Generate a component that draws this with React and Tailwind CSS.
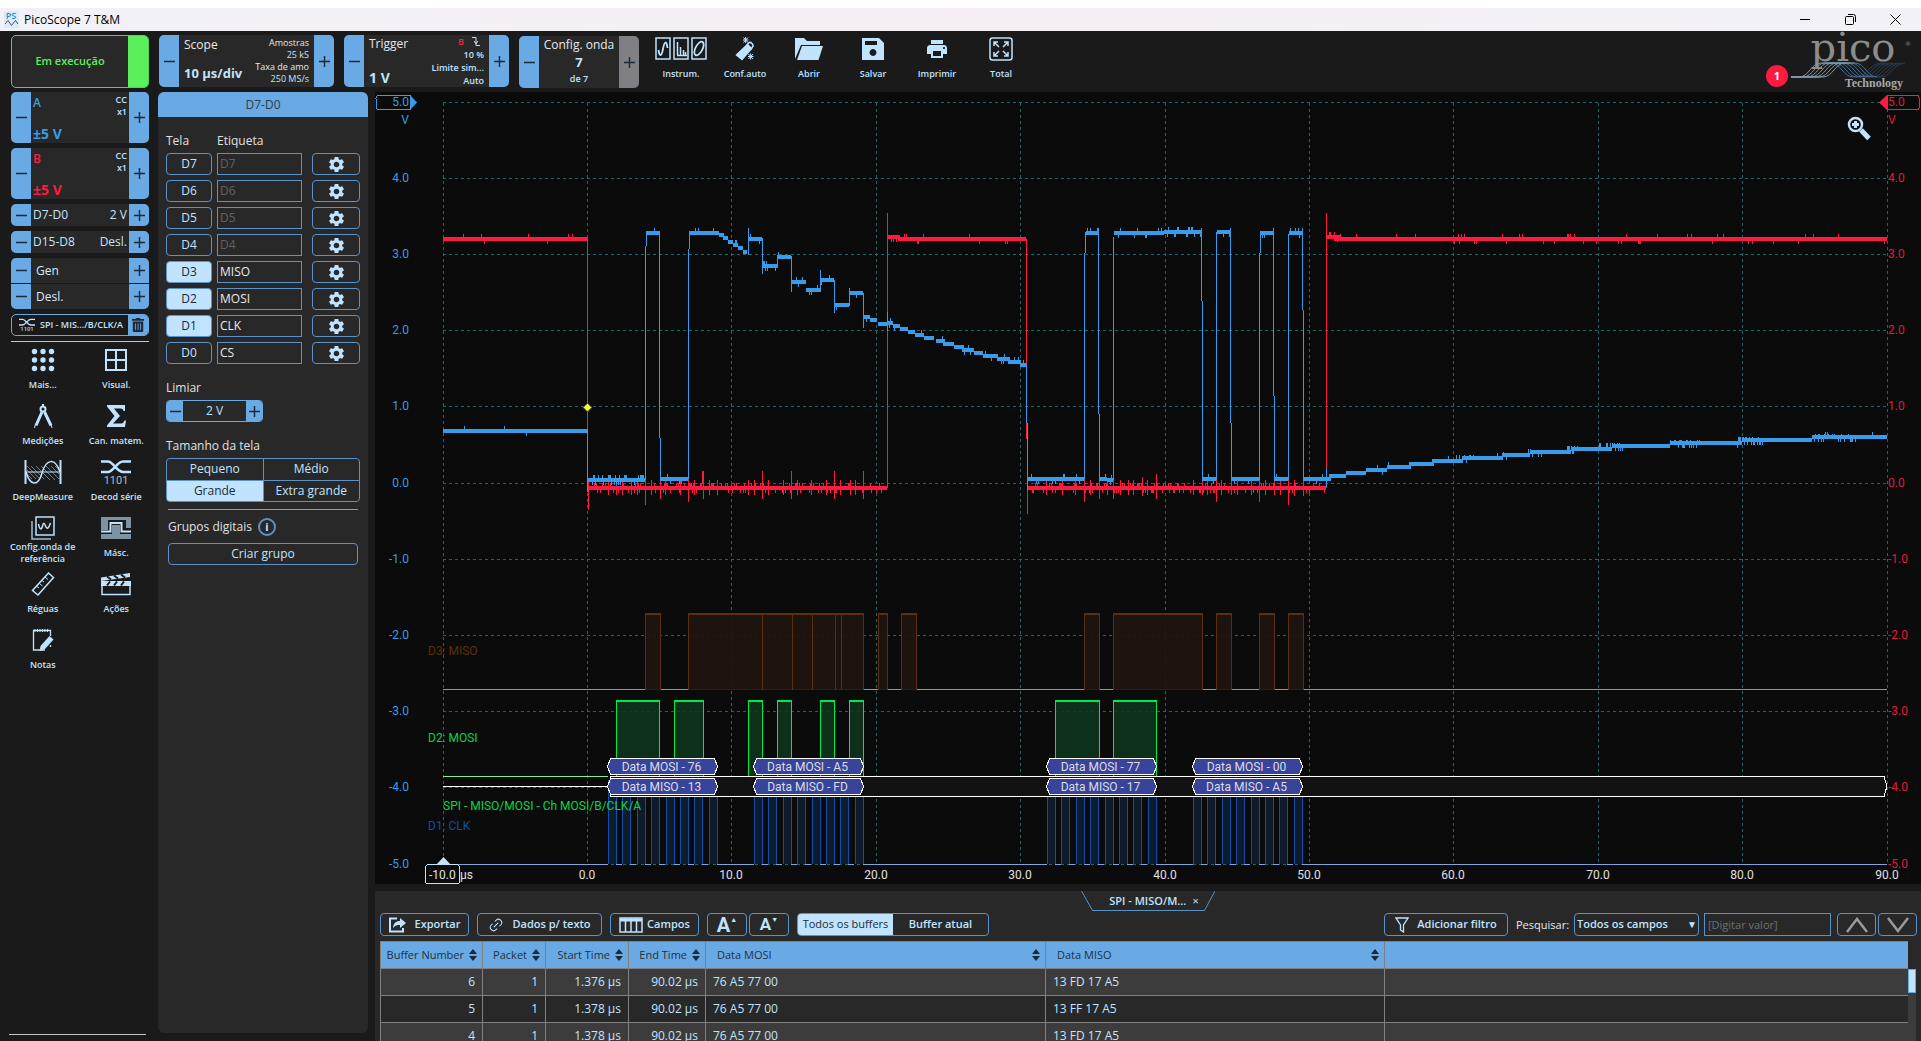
import { FaTrashAlt } from 'react-icons/fa';
import { MdSettings, MdPrint } from 'react-icons/md';
import { Link2 } from 'lucide-react';

const DIGITAL_INPUTS = [
	{ id: 'D7' },
	{ id: 'D6' },
	{ id: 'D5' },
	{ id: 'D4' },
	{ id: 'D3', label: 'MISO', on: true },
	{ id: 'D2', label: 'MOSI', on: true },
	{ id: 'D1', label: 'CLK', on: true },
	{ id: 'D0', label: 'CS' },
];

const COLUMNS = [
	{ name: 'Buffer Number', width: 'w-[102px]' },
	{ name: 'Packet', width: 'w-[63px]' },
	{ name: 'Start Time', width: 'w-[83px]' },
	{ name: 'End Time', width: 'w-[77px]' },
	{ name: 'Data MOSI', width: 'w-[340px]', left: true },
	{ name: 'Data MISO', width: 'w-[339px]', left: true },
];

const PACKETS = [
	['6', '1', '1.376 µs', '90.02 µs', '76 A5 77 00', '13 FD 17 A5'],
	['5', '1', '1.378 µs', '90.02 µs', '76 A5 77 00', '13 FF 17 A5'],
	['4', '1', '1.378 µs', '90.02 µs', '76 A5 77 00', '13 FD 17 A5'],
];

/* ---------- Icons ---------- */

const Svg = ({ w = 24, h = 24, children, className = '' }) => (
	<svg
		width={w}
		height={h}
		viewBox={`0 0 ${w} ${h}`}
		fill="none"
		stroke="currentColor"
		strokeWidth="1.5"
		className={className}
		aria-hidden="true">
		{children}
	</svg>
);

const InstrumentsIcon = () => (
	<Svg w={52}>
		<rect x="1" y="1" width="14" height="21" />
		<rect x="19" y="1" width="14" height="21" />
		<rect x="37" y="1" width="14" height="21" />
		<path d="M3.5 13c1 7 3 7 4.5-1s3.5-9 4.5-1" strokeWidth="1.8" />
		<path d="M22.5 5v13M25.5 10v8M28.5 13v5M30.5 15v3M22 18.5h10" />
		<ellipse cx="44" cy="11.5" rx="3.5" ry="7.5" transform="rotate(28 44 11.5)" strokeWidth="1.8" />
	</Svg>
);

const WandIcon = () => (
	<Svg>
		<path d="M14.5 7.5l4 4L9 22.5 3.5 18z" fill="currentColor" />
		<path d="M13.5 8.5l2-2.5q1.5-1.5 3.5.5t.5 3.5l-2 2.5" />
		<path d="M10.5.5l4.5 5M15 .5l-4.5 5M12.7 0v6M10 3h5.5" strokeWidth="1" />
		<path d="M15.5 17l4.5 5M20 17l-4.5 5M17.7 16.5v6M15 19.5h5.5" strokeWidth="1" />
	</Svg>
);

const FolderIcon = () => (
	<Svg w={28}>
		<path d="M0 22V1h9l3 3h13v4H6z" fill="currentColor" stroke="none" />
		<path d="M7 9h21l-4.5 14H2z" fill="currentColor" stroke="none" />
	</Svg>
);

const SaveIcon = () => (
	<Svg>
		<path
			d="M1 1h17l5 5v17H1zM4 4v4h12V4zM12 12a3.5 3.5 0 1 0 .01 0z"
			fill="currentColor"
			fillRule="evenodd"
			stroke="none"
		/>
	</Svg>
);

const FullscreenIcon = () => (
	<Svg>
		<rect x="1" y="1" width="22" height="22" rx="2.5" />
		<path d="M10 10L5.5 5.5M5 9V5h4M14 10l4.5-4.5M15 5h4v4M10 14l-4.5 4.5M5 15v4h4M14 14l4.5 4.5M15 19h4v-4" />
	</Svg>
);

const DotsIcon = () => (
	<Svg>
		{[3.5, 12, 20.5].map((cy) =>
			[3.5, 12, 20.5].map((cx) => (
				<circle key={`${cx}-${cy}`} cx={cx} cy={cy} r="2.7" fill="currentColor" stroke="none" />
			)),
		)}
	</Svg>
);

const ViewsIcon = () => (
	<Svg>
		<path d="M2 2h20v20H2zM12 2v20M2 12h20" strokeWidth="2" />
	</Svg>
);

const CompassIcon = () => (
	<Svg>
		<circle cx="12" cy="5" r="2.5" strokeWidth="2" />
		<path d="M12 0v2.5" strokeWidth="2" />
		<path d="M11 8L5 21.5M13.5 8L20 21.5" strokeWidth="3" />
		<path d="M4.5 20l-1 4M20 20l1 4" strokeWidth="1" />
	</Svg>
);

const SigmaIcon = () => (
	<Svg>
		<path
			d="M3 1h18v6h-1.5c-.5-2-1.5-2.500-4-2.5H10l6 7.5-7 7.5h7c2.500 0 3.500-.5 4.500-3H22l-1 6.500H3v-1.500L10.500 12 3 2.500z"
			fill="currentColor"
			stroke="none"
		/>
	</Svg>
);

const DeepMeasureIcon = () => (
	<Svg w={38}>
		<path
			d="M3 6l12 12M3 10l9 9M3 14l5 5M7 6l13 13M12 6l14 14M17 6l14 14M22 6l13 13M27 6l8 8M31 6l4 4"
			strokeWidth="1"
			opacity="0.5"
		/>
		<path d="M1.5 0v24M36.5 0v24" strokeWidth="2" />
		<path d="M2 12h34" strokeWidth="1" />
		<path d="M2 12C6 26 14 27 18 13S31-3 36 12" />
	</Svg>
);

const DecodeIcon = ({ small }) => (
	<svg
		width={small ? 16 : 30}
		height={small ? 14 : 24}
		viewBox="0 0 30 24"
		fill="none"
		className="shrink-0 overflow-visible"
		aria-hidden="true">
		<path
			d="M0 1.5h7c5 0 9 10.5 15 10.5h8M0 12h7c5 0 9-10.5 15-10.5h8"
			stroke="currentColor"
			strokeWidth="2.5"
		/>
		<text x="15" y="24" textAnchor="middle" fill="currentColor" className="font-['Roboto',sans-serif] text-[11px]" opacity="0.8">
			1101
		</text>
	</svg>
);

const RefWaveIcon = () => (
	<Svg>
		<rect x="5" y="1" width="18" height="18" />
		<path d="M1 5v18h19" opacity="0.8" />
		<path d="M7.5 8c1 6 3 6 4 2s2-3 3 0 2.5 4 5-3" />
	</Svg>
);

const MaskIcon = () => (
	<Svg w={30}>
		<path d="M0 1h30v11h-5V4H7v10H0zM0 18h11V9h8v9h11v5H0z" fill="currentColor" stroke="none" opacity="0.6" />
		<path d="M0 15.5h9.5V7h11v8.5H30" strokeWidth="2" />
	</Svg>
);

const RulerIcon = () => (
	<Svg>
		<path d="M17.5 1l5 4.5L7 23l-5.5-4.5z" />
		<path d="M14 5l3 2.5M11 8.5l2 1.5M8.5 11.5l3 2.5M6 14.5l2 1.5" strokeWidth="1" />
	</Svg>
);

const ClapperIcon = () => (
	<Svg w={30}>
		<path d="M1 12h28v10.5H1z" />
		<path d="M0 9h30v5H0zM0 5.5L29 1v4L0 9z" fill="currentColor" stroke="none" />
		<path d="M6 4.5l4 3M13 3.5l4 3M20 2.5l4 3M9 9.5l-3 4M16 9.5l-3 4M23 9.5l-3 4" stroke="#1a1a1a" strokeWidth="2" />
	</Svg>
);

const NotesIcon = () => (
	<Svg>
		<path d="M14 22H2.5V2.5h17V8M19.5 17v2" strokeWidth="1.3" />
		<path d="M4 1v3M6.5 1v3M9 1v3M11.5 1v3M14 1v3M16.5 1v3" strokeWidth="1" />
		<path d="M18.5 8l4 3.5L14 21l-5.5 2 1-5z" fill="currentColor" stroke="none" />
	</Svg>
);

const ExportIcon = () => (
	<Svg w={18} h={16}>
		<path d="M8 1.5H1v13h13V11" strokeWidth="2" />
		<path d="M4 11c.5-5 3-7 7-7V1l6 5-6 5V8c-3 0-5 .5-7 3z" fill="currentColor" stroke="none" />
	</Svg>
);

const FieldsIcon = () => (
	<Svg w={24} h={16}>
		<path d="M1 1h22v14H1zM6.5 1v14M12 1v14M17.5 1v14" />
		<path d="M1 3h22" strokeWidth="3" />
	</Svg>
);

const FunnelIcon = () => (
	<Svg w={14} h={16}>
		<path d="M1 1h12L8.5 8v7l-3-2V8z" strokeWidth="1.3" />
	</Svg>
);

const AppIcon = () => (
	<svg width="15" height="17" viewBox="0 0 15 17" className="overflow-visible" aria-hidden="true">
		<rect width="15" height="17" fill="#dcebf5" />
		<text x="7" y="8" textAnchor="middle" fill="#2b8fd0" className="font-['Open_Sans',sans-serif] text-[9px] font-semibold">
			PS
		</text>
		<path d="M1 13l3-3.5 3.5 5 4-5 2.5 3.5" fill="none" stroke="#44546a" />
	</svg>
);

const PicoLogo = () => (
	<svg width="124" height="56" viewBox="0 0 124 56" className="overflow-visible" role="img" aria-label="pico Technology">
		<text x="66" y="26" textAnchor="middle" fill="#8c8c8c" className="font-['DejaVu_Serif',serif] text-[40px]">
			pico
		</text>
		<text x="118" y="11" fill="#8c8c8c" className="font-['DejaVu_Serif',serif] text-[6px]">
			®
		</text>
		{[0, 1, 2, 3, 4, 5, 6].map((i) => (
			<g key={i} fill="none">
				<path
					d={`M4 42H${12 + i * 4}C${22 + i * 4} 42 ${24 + i * 4} 28 ${34 + i * 4} 28H${44 + i * 4}`}
					stroke="#7a98b0"
				/>
				<path d={`M${44 + i * 4} 28C${54 + i * 4} 28 ${56 + i * 4} 42 ${66 + i * 4} 42`} stroke="#4a6f96" />
				<path
					d={`M${66 + i * 4} 42h4C${80 + i * 4} 42 ${80 + i * 4} 30 ${94 + i * 4} 28`}
					stroke="#23405a"
				/>
			</g>
		))}
		<text x="116" y="52" textAnchor="end" fill="#a8a8a8" className="font-['Liberation_Serif',serif] text-[12px] font-bold">
			Technology
		</text>
	</svg>
);

/* ---------- Small controls ---------- */

function Step({ sign, className = '', label }) {
	return (
		<button
			type="button"
			aria-label={label}
			className={`flex w-5 shrink-0 items-center justify-center bg-[#6aaae4] text-[#1c2a38] ${className}`}>
			<svg width="11" height="11" viewBox="0 0 11 11" stroke="currentColor" strokeWidth="1.5" aria-hidden="true">
				<path d={sign === '+' ? 'M0 5.5h11M5.5 0v11' : 'M0 5.5h11'} />
			</svg>
		</button>
	);
}

function Stepper({ name, className, children, plusClass = '' }) {
	return (
		<div className={`flex overflow-hidden rounded-[5px] bg-[#282828] ${className}`}>
			<Step sign="-" label={`${name} menos`} />
			<div className="flex min-w-0 flex-1">{children}</div>
			<Step sign="+" label={`${name} mais`} className={plusClass} />
		</div>
	);
}

function Channel({ name, color }) {
	return (
		<Stepper name={`Canal ${name}`} className="h-[51px]">
			<button type="button" className={`flex flex-1 justify-between px-[2px] ${color}`}>
				<span className="flex h-full flex-col items-start justify-between pt-[3px] pb-px">
					<span className="text-[12px] leading-4 font-semibold">{name}</span>
					<span className="text-[14px] leading-4 font-bold">±5 V</span>
				</span>
				<span className="flex flex-col items-end pt-[2px] text-[9px] leading-3 font-semibold text-[#c0e4ff]">
					<span>CC</span>
					<span>x1</span>
				</span>
			</button>
		</Stepper>
	);
}

function ToolButton({ icon, label }) {
	return (
		<button type="button" className="flex w-16 flex-col items-center text-[#c0e4ff]">
			{icon}
			<span className="mt-[5px] text-[9px] leading-4 font-semibold">{label}</span>
		</button>
	);
}

function SideTool({ icon, label }) {
	return (
		<button type="button" className="flex h-14 flex-col items-center text-[#c0e4ff]">
			{icon}
			<span className="flex h-[26px] items-center text-center text-[9px] leading-3 font-semibold">{label}</span>
		</button>
	);
}

const outline = 'rounded-[4px] border border-[#5b93c8] text-[#c0e4ff]';

/* ---------- Title bar and toolbar ---------- */

function TitleBar() {
	return (
		<div className="shrink-0 border-t-8 border-white bg-linear-to-r from-[#f2f1f8] via-[#f6eef4] to-[#f2f1f8]">
			<div className="flex h-[23px] items-center pl-1 text-black">
				<AppIcon />
				<span className="ml-[5px] flex-1 text-[12px]">PicoScope 7 T&amp;M</span>
				<div className="flex gap-[34px] pr-5">
					<button type="button" aria-label="Minimizar">
						<Svg w={11} h={11}>
							<path d="M0 5.5h10" strokeWidth="1" />
						</Svg>
					</button>
					<button type="button" aria-label="Restaurar">
						<Svg w={11} h={11}>
							<rect x=".5" y="2.5" width="8" height="8" rx="1" strokeWidth="1" />
							<path d="M3 .5h5.5a2 2 0 0 1 2 2V8" strokeWidth="1" />
						</Svg>
					</button>
					<button type="button" aria-label="Fechar">
						<Svg w={11} h={11}>
							<path d="M.5.5l10 10M10.5.5l-10 10" strokeWidth="1" />
						</Svg>
					</button>
				</div>
			</div>
		</div>
	);
}

function TopBar() {
	return (
		<header className="flex h-[61px] shrink-0 items-start gap-[10px] pt-1 pl-[11px]">
			<button
				type="button"
				className="flex h-[53px] w-[138px] overflow-hidden rounded-[5px] border border-[#4fd455] bg-[#282828] text-[11px] font-semibold text-[#5bf05b]">
				<span className="flex-1 self-center">Em execução</span>
				<span className="h-full w-5 bg-[#5bf05b]" />
			</button>

			<Stepper name="Base de tempo" className="h-[52px] w-[175px]">
				<button type="button" className="flex flex-1 justify-between px-[5px] text-[#c0e4ff]">
					<span className="flex h-full flex-col items-start justify-between pt-[2px] pb-[6px]">
						<span className="text-[12px] leading-4 text-[#e8e8e8]">Scope</span>
						<span className="text-[13px] leading-4 font-bold">10 µs/div</span>
					</span>
					<span className="flex flex-col items-end pt-[2px] text-[9px] leading-3 font-medium">
						<span className="text-[#e8e8e8]">Amostras</span>
						<span>25 kS</span>
						<span className="text-[#e8e8e8]">Taxa de amo</span>
						<span>250 MS/s</span>
					</span>
				</button>
			</Stepper>

			<Stepper name="Trigger" className="h-[52px] w-[165px]">
				<button type="button" className="flex flex-1 justify-between px-[5px] text-[#c0e4ff]">
					<span className="flex h-full flex-col items-start justify-between pt-[1px] pb-[1px]">
						<span className="text-[12px] leading-4 text-[#e8e8e8]">Trigger</span>
						<span className="text-[14px] leading-4 font-bold">1 V</span>
					</span>
					<span className="flex flex-col items-end text-[9px] leading-[13px] font-semibold">
						<span className="flex items-center gap-2 pr-1 text-[#ff1b3f]">
							B
							<svg width="8" height="9" viewBox="0 0 8 9" fill="none" stroke="#c0e4ff" aria-hidden="true">
								<path d="M0 .5h4v8h4M2 4l2 3 2-3" />
							</svg>
						</span>
						<span>10 %</span>
						<span>Limite sim...</span>
						<span>Auto</span>
					</span>
				</button>
			</Stepper>

			<Stepper name="Forma de onda" className="mt-px h-[52px] w-[120px]" plusClass="bg-[#808084]!">
				<button type="button" className="flex flex-1 flex-col items-center justify-center text-[#c0e4ff]">
					<span className="text-[12px] leading-4 whitespace-nowrap text-[#e8e8e8]">Config. onda</span>
					<span className="text-[13px] leading-[18px] font-bold">7</span>
					<span className="text-[9px] leading-4 font-semibold">de 7</span>
				</button>
			</Stepper>

			<nav className="flex pt-[2px]" aria-label="Ferramentas">
				<ToolButton icon={<InstrumentsIcon />} label="Instrum." />
				<ToolButton icon={<WandIcon />} label="Conf.auto" />
				<ToolButton icon={<FolderIcon />} label="Abrir" />
				<ToolButton icon={<SaveIcon />} label="Salvar" />
				<ToolButton icon={<MdPrint size={24} />} label="Imprimir" />
				<ToolButton icon={<FullscreenIcon />} label="Total" />
			</nav>

			<div className="relative ml-auto pr-[10px]">
				<PicoLogo />
				<span className="absolute top-[30px] left-[-21px] flex size-[22px] items-center justify-center rounded-full bg-[#ff1b3f] text-[11px] font-bold text-white">
					1
				</span>
			</div>
		</header>
	);
}

/* ---------- Left sidebar ---------- */

function Sidebar() {
	return (
		<aside className="flex w-[158px] shrink-0 flex-col pr-[9px] pl-[11px]">
			<div className="flex flex-col gap-[5px]">
				<Channel name="A" color="text-[#389cea]" />
				<Channel name="B" color="text-[#ff1b3f]" />
				{[
					['D7-D0', '2 V'],
					['D15-D8', 'Desl.'],
				].map(([name, value]) => (
					<Stepper key={name} name={name} className="h-[22px]">
						<button
							type="button"
							className="flex flex-1 items-center justify-between px-[2px] text-[12px] text-[#c0e4ff]">
							<span>{name}</span>
							<span>{value}</span>
						</button>
					</Stepper>
				))}
				<div className="flex flex-col gap-px overflow-hidden rounded-[5px]">
					{['Gen', 'Desl.'].map((name) => (
						<div key={name} className="flex h-[25px] bg-[#282828]">
							<Step sign="-" label={`${name} menos`} />
							<button type="button" className="flex-1 px-[5px] text-left text-[12px] text-[#d8e8f4]">
								{name}
							</button>
							<Step sign="+" label={`${name} mais`} />
						</div>
					))}
				</div>
				<div className="flex h-[22px] overflow-hidden rounded-[5px] border border-[#6aaae4] text-[#c0e4ff]">
					<button
						type="button"
						className="flex flex-1 items-center justify-end gap-[5px] pr-[5px] text-[9px] font-semibold whitespace-nowrap">
						<DecodeIcon small />
						SPI - MIS.../B/CLK/A
					</button>
					<button
						type="button"
						aria-label="Remover decodificador"
						className="flex w-5 items-center justify-center bg-[#6aaae4] text-[#1c2a38]">
						<FaTrashAlt size={14} />
					</button>
				</div>
			</div>

			<hr className="mt-[5px] border-[#c8c8c8]" />

			<nav className="mt-[6px] -mr-1 -ml-[5px] grid grid-cols-2" aria-label="Menu">
				<SideTool icon={<DotsIcon />} label="Mais..." />
				<SideTool icon={<ViewsIcon />} label="Visual." />
				<SideTool icon={<CompassIcon />} label="Medições" />
				<SideTool icon={<SigmaIcon />} label="Can. matem." />
				<SideTool icon={<DeepMeasureIcon />} label="DeepMeasure" />
				<SideTool icon={<DecodeIcon />} label="Decod série" />
				<SideTool icon={<RefWaveIcon />} label="Config.onda de referência" />
				<SideTool icon={<MaskIcon />} label="Másc." />
				<SideTool icon={<RulerIcon />} label="Réguas" />
				<SideTool icon={<ClapperIcon />} label="Ações" />
				<SideTool icon={<NotesIcon />} label="Notas" />
			</nav>

			<hr className="mt-auto mr-[3px] mb-[6px] -ml-[2px] border-[#c8c8c8]" />
		</aside>
	);
}

/* ---------- Digital inputs panel ---------- */

function DigitalPanel() {
	return (
		<section className="mb-2 flex w-[210px] shrink-0 flex-col overflow-hidden rounded-[6px] bg-[#282828] text-[12px] text-[#e0e0e0]">
			<h2 className="flex h-[25px] items-center justify-center bg-[#6aaae4] text-[#2a3a4a]">D7-D0</h2>

			<div className="px-2">
				<div className="mt-4 flex gap-[5px] leading-4">
					<span className="w-[46px]">Tela</span>
					<span>Etiqueta</span>
				</div>

				<div className="mt-1 flex flex-col gap-[5px]">
					{DIGITAL_INPUTS.map(({ id, label, on }) => (
						<div key={id} className="flex h-[22px] items-stretch gap-[5px]">
							<button
								type="button"
								aria-pressed={!!on}
								className={`w-[46px] rounded-[4px] border border-[#5b93c8] ${
									on ? 'bg-[#c0e4ff] text-[#1c2a38]' : 'text-[#c0e4ff]'
								}`}>
								{id}
							</button>
							<input
								type="text"
								aria-label={`Etiqueta ${id}`}
								placeholder={id}
								defaultValue={label ?? ''}
								className="w-[85px] border border-[#5b93c8] bg-transparent px-[2px] text-[#e8e8e8] placeholder:text-[#626262]"
							/>
							<button
								type="button"
								aria-label={`Configurar ${id}`}
								className="ml-[5px] flex flex-1 items-center justify-center rounded-[4px] border border-[#5b93c8] text-[#c0e4ff]">
								<MdSettings size={19} />
							</button>
						</div>
					))}
				</div>

				<p className="mt-4 leading-4">Limiar</p>
				<div className="mt-1 flex h-[22px] w-[97px] overflow-hidden rounded-[4px] border border-[#6aaae4] text-[#c0e4ff]">
					<Step sign="-" label="Limiar menos" className="w-4!" />
					<output className="flex-1 text-center leading-5">2 V</output>
					<Step sign="+" label="Limiar mais" className="w-4!" />
				</div>

				<p className="mt-4 leading-4">Tamanho da tela</p>
				<div className="mt-1 grid h-[44px] grid-cols-2 gap-px overflow-hidden rounded-[4px] border border-[#5b93c8] bg-[#5b93c8]">
					{['Pequeno', 'Médio', 'Grande', 'Extra grande'].map((size) => (
						<button
							key={size}
							type="button"
							aria-pressed={size === 'Grande'}
							className={
								size === 'Grande' ? 'bg-[#c0e4ff] text-[#1c2a38]' : 'bg-[#282828] text-[#c0e4ff]'
							}>
							{size}
						</button>
					))}
				</div>

				<hr className="mx-[2px] mt-[7px] border-[#9c9c9c]" />
				<div className="mx-[2px] mt-2 flex items-center gap-[6px]">
					<span>Grupos digitais</span>
					<button
						type="button"
						aria-label="Informações"
						className="flex size-[18px] items-center justify-center rounded-full border-2 border-[#5b93c8] text-[11px] font-bold text-[#c0e4ff]">
						i
					</button>
				</div>
				<div className="mx-[2px] mt-[7px] flex">
					<button type="button" className={`h-[22px] flex-1 ${outline}`}>
						Criar grupo
					</button>
				</div>
			</div>
		</section>
	);
}

/* ---------- Scope view ---------- */

const LEFT = 443;
const RIGHT = 1887;
const GRID_X = [443, 587, 731, 876, 1020, 1165, 1309, 1453, 1598, 1742, 1887];
const GRID_Y = [102, 178, 254, 330, 406, 483, 559, 635, 711, 787, 864];

// flat pieces of each analogue trace: [x1, x2, y]
const BLUE_FLAT = [
	[443, 588, 431], [588, 645, 480], [646, 660, 233], [660, 688, 479], [689, 719, 233],
	[719, 724, 235], [723, 728, 238], [728, 733, 242], [733, 738, 245], [738, 743, 248],
	[743, 747, 252], [748, 762, 239], [762, 777, 266], [777, 791, 257], [791, 806, 282],
	[806, 820, 290], [820, 834, 280], [834, 849, 305], [849, 863, 293], [863, 870, 317],
	[870, 877, 320], [878, 887, 324], [887, 893, 323], [893, 900, 326], [900, 908, 329],
	[908, 915, 332], [915, 924, 335], [924, 934, 338], [936, 945, 341], [943, 954, 344],
	[954, 964, 347], [962, 974, 350], [974, 983, 353], [983, 998, 356], [997, 1010, 359],
	[1008, 1021, 362], [1020, 1027, 365], [1028, 1084, 479], [1086, 1099, 233], [1099, 1107, 479],
	[1107, 1113, 480], [1114, 1164, 233], [1164, 1202, 232], [1202, 1216, 479], [1217, 1231, 232],
	[1231, 1259, 479], [1260, 1274, 233], [1274, 1288, 479], [1289, 1302, 233], [1303, 1331, 479],
	[1329, 1346, 476], [1346, 1366, 473], [1366, 1387, 470], [1387, 1411, 467], [1409, 1434, 464],
	[1432, 1462, 461], [1462, 1502, 458], [1502, 1530, 455], [1530, 1571, 452], [1571, 1612, 449],
	[1612, 1670, 446], [1670, 1742, 443], [1742, 1812, 440], [1812, 1887, 437],
];
const BLUE_EDGES = [
	[587, 431, 492], [645, 246, 480], [646, 232, 246], [659, 232, 438], [660, 438, 480],
	[688, 249, 479], [689, 233, 249], [748, 228, 255], [762, 238, 274], [777, 255, 268],
	[791, 256, 292], [820, 270, 292], [834, 280, 313], [849, 288, 306], [863, 293, 328],
	[887, 312, 331], [1026, 364, 423], [1027, 423, 490], [1084, 253, 479], [1085, 232, 253],
	[1098, 228, 414], [1099, 414, 480], [1113, 237, 480], [1201, 228, 301], [1202, 301, 480],
	[1216, 232, 480], [1230, 228, 423], [1231, 423, 480], [1259, 253, 480], [1260, 232, 253],
	[1273, 228, 396], [1274, 396, 480], [1288, 234, 480], [1302, 228, 310], [1303, 310, 480],
	[1326, 468, 487],
];
const RED_FLAT = [
	[443, 588, 239], [588, 887, 488], [888, 900, 237], [898, 1026, 239],
	[1028, 1326, 488], [1327, 1340, 237], [1334, 1887, 239],
];
const RED_EDGES = [
	[587, 239, 430], [588, 480, 510], [887, 213, 488], [1026, 239, 439],
	[1027, 474, 514], [1326, 213, 488],
];
// crosstalk spikes on the low level of channel B
const RED_SPIKES = [
	[645, 477, 505], [660, 471, 499], [688, 477, 502], [702, 471, 484], [703, 471, 499],
	[762, 471, 499], [791, 471, 499], [834, 471, 499], [863, 471, 499], [1084, 477, 502],
	[1099, 471, 499], [1113, 477, 499], [1156, 474, 499], [1216, 477, 502], [1259, 477, 502],
	[1288, 480, 505], [1303, 477, 496], [1294, 480, 496], [1142, 477, 496],
];
const MEDIUM_SPIKES = [
	608, 616, 622, 631, 637, 651, 665, 680, 694, 709, 717, 748, 754, 768, 783, 797, 811, 826, 840,
	850, 855, 1046, 1062, 1075, 1090, 1107, 1120, 1128, 1133, 1147, 1193, 1202, 1207, 1221, 1231,
	1237, 1251, 1265, 1274, 1280,
];
// stretches where the slow ramp hovers between two levels
const RAMP_STEPS = [
	[1455, 1475, 459], [1500, 1508, 456], [1524, 1542, 453], [1566, 1578, 450],
	[1598, 1622, 447], [1668, 1700, 444], [1738, 1764, 441], [1806, 1856, 438],
];

const MISO_HIGH = [
	[645, 660], [688, 863], [878, 887], [901, 916], [1084, 1099],
	[1113, 1202], [1216, 1231], [1259, 1274], [1288, 1303],
];
const MISO_GLITCHES = [762, 792, 812, 835, 841];
const MOSI_HIGH = [
	[616, 659], [674, 703], [748, 762], [777, 791], [820, 834],
	[849, 863], [1055, 1099], [1113, 1156],
];
const BURSTS = [
	{ start: 608, mosi: '76', miso: '13' },
	{ start: 754, mosi: 'A5', miso: 'FD' },
	{ start: 1047, mosi: '77', miso: '17' },
	{ start: 1193, mosi: '00', miso: 'A5' },
];

const hash = (n) => {
	const s = Math.sin(n * 12.9898) * 43758.5453;
	return s - Math.floor(s);
};

const flatPath = (pieces) => pieces.map(([x1, x2, y]) => `M${x1} ${y}H${x2}`).join('');
const edgePath = (edges) => edges.map(([x, y1, y2]) => `M${x + 0.5} ${y1}V${y2}`).join('');

// one-pixel quantisation blips above or below a flat piece
function blipPath(pieces, density) {
	let d = '';
	pieces.forEach(([x1, x2, y]) => {
		for (let x = x1 + 1; x < x2 - 1; x++) {
			if (hash(x * 3 + y) < density(x, y)) {
				d += hash(x + 7) > 0.45 ? `M${x + 0.5} ${y - 5}V${y}` : `M${x + 0.5} ${y}V${y + 5}`;
			}
		}
	});
	return d;
}

function rampPath() {
	let d = '';
	RAMP_STEPS.forEach(([x1, x2, y]) => {
		for (let x = x1; x < x2; x++) {
			const r = hash(x);
			if (r > 0.7) d += `M${x + 0.5} ${y - 4}V${y}`;
			else if (r < 0.3) d += `M${x + 0.5} ${y}V${y + 4}`;
		}
	});
	return d;
}

const bluePath =
	edgePath(BLUE_EDGES) +
	blipPath(BLUE_FLAT, (x, y) => {
		if (y === 480) return 0.5;
		if (x > 1160 && x < 1203) return 0.4;
		if (x < 588) return 0.04;
		return x > 1331 ? 0.03 : 0.12;
	}) +
	rampPath();
const redPath =
	edgePath(RED_EDGES) +
	edgePath(RED_SPIKES) +
	MEDIUM_SPIKES.map((x) => `M${x + 0.5} 480V495`).join('') +
	blipPath(RED_FLAT, (x, y) => {
		if (y === 488) return 0.3;
		if (y === 237) return 0.4;
		return x < 588 ? 0.05 : 0.09;
	});

function Pulses({ spans, top, bottom, stroke, fill, topWidth }) {
	return spans.map(([x1, x2]) => (
		<g key={x1}>
			<rect x={x1} y={top} width={x2 - x1} height={bottom - top} fill={fill} />
			<path d={`M${x1 + 0.5} ${bottom}V${top}M${x2 + 0.5} ${top}V${bottom}`} stroke={stroke} />
			<path d={`M${x1} ${top}H${x2 + 1}`} stroke={stroke} strokeWidth={topWidth} />
		</g>
	));
}

function Packet({ x, y, text }) {
	const r = x + 110;
	return (
		<g>
			<path
				d={`M${x + 3} ${y}H${r - 3}L${r} ${y + 8}L${r - 3} ${y + 16}H${x + 3}L${x} ${y + 8}Z`}
				fill="#38439a"
				stroke="#ffffff"
			/>
			<text x={x + 54} y={y + 12} textAnchor="middle" fill="#dcdce4">
				{text}
			</text>
		</g>
	);
}

function ScopeView() {
	const clk = BURSTS.flatMap(({ start }) =>
		Array.from({ length: 8 }, (_, i) => {
			const x = Math.round(start + i * 14.4);
			return [x, x + 8];
		}),
	);

	return (
		<div className="flex min-h-0 flex-1 bg-[#0b0b0b]">
			<svg
				viewBox="375 92 1546 792"
				className="size-full font-['Roboto',sans-serif] text-[12px]"
				shapeRendering="crispEdges"
				fill="none"
				role="img"
				aria-label="Formas de onda">
				{/* Grid */}
				<g stroke="#1c6868" strokeDasharray="3 3">
					{GRID_X.map((x) => (
						<path key={x} d={`M${x + 0.5} 103V864`} />
					))}
					{GRID_Y.map((y) => (
						<path key={y} d={`M${LEFT} ${y + 0.5}H${RIGHT}`} />
					))}
				</g>

				{/* Digital channels */}
				<path d={`M${LEFT} 689.5H${RIGHT}`} stroke="#a09484" />
				<Pulses spans={MISO_HIGH} top={614} bottom={690} stroke="#5c300f" fill="#20150fe6" topWidth={2} />
				<path d={MISO_GLITCHES.map((x) => `M${x + 0.5} 614V690`).join('')} stroke="#5c300f" />
				<Pulses spans={MOSI_HIGH} top={701} bottom={776} stroke="#00e84e" fill="#0c361ce0" topWidth={2} />
				<path d="M443 776.5H608" stroke="#82f0a0" />
				<Pulses spans={clk} top={780} bottom={864} stroke="#0f4fa8" fill="#0d1b2c" topWidth={1} />
				<path
					d={`M443 864.5H608M718 864.5H754M864 864.5H1047M1157 864.5H1193M1303 864.5H1887${clk
						.map(([, x2]) => `M${x2} 864.5h6`)
						.join('')}`}
					stroke="#86a4dc"
				/>

				{/* Analogue channels */}
				<path d={flatPath(RED_FLAT)} stroke="#ff1b3f" strokeWidth="4" />
				<path d={redPath} stroke="#ff1b3f" />
				<path d={flatPath(BLUE_FLAT)} stroke="#389cea" strokeWidth="4" />
				<path d={bluePath} stroke="#389cea" />

				{/* Trigger marker */}
				<path
					d="M587.5 403l4.5 4.5-4.5 4.5-4.5-4.5z"
					fill="#ffff00"
					stroke="#1a1a90"
					shapeRendering="auto"
				/>

				{/* Serial decoding */}
				<path d="M443 786.5H608" stroke="#ffffff" />
				<path d="M611 776.5H1884L1887 786l-3 10.5H611L608 786z" fill="#121212" stroke="#ffffff" />
				{BURSTS.map(({ start, mosi, miso }) => (
					<g key={start}>
						<Packet x={start - 0.5} y={758.5} text={`Data MOSI - ${mosi}`} />
						<Packet x={start - 0.5} y={778.5} text={`Data MISO - ${miso}`} />
					</g>
				))}
				<text x="428" y="655" fill="#5c300f">D3: MISO</text>
				<text x="428" y="742" fill="#00d848">D2: MOSI</text>
				<text x="428" y="830" fill="#0f4fa8">D1: CLK</text>
				<text x="443" y="810" fill="#00d848">SPI - MISO/MOSI - Ch MOSI/B/CLK/A</text>

				{/* Axes */}
				<path d="M410 95.5h-31q-3 0-3 3v8q0 3 3 3h31z" stroke="#389cea" />
				<path d="M410 95l7 7.5-7 7.5z" fill="#389cea" shapeRendering="auto" />
				<path d="M1887 95.5h30q2 0 2 2v10q0 2-2 2h-30z" stroke="#ff1b3f" />
				<path d="M1887 95l-8 7.5 8 7.5z" fill="#ff1b3f" shapeRendering="auto" />
				{GRID_Y.map((y, i) => {
					const volts = (5 - i).toFixed(1);
					return (
						<g key={y}>
							<text x="409" y={y + 4} textAnchor="end" fill="#389cea">
								{volts}
							</text>
							<text x="1888" y={y + 4} fill="#e01a3a">
								{volts}
							</text>
						</g>
					);
				})}
				<text x="409" y="124" textAnchor="end" fill="#389cea">V</text>
				<text x="1888" y="124" fill="#e01a3a">V</text>
				{GRID_X.slice(1).map((x, i) => (
					<text key={x} x={x} y="879" textAnchor="middle" fill="#e0e0e0">
						{(i * 10).toFixed(1)}
					</text>
				))}
				<text x="429" y="879" fill="#e0e0e0">-10.0</text>
				<text x="460" y="879" fill="#e0e0e0">µs</text>
				<path d="M425.5 881.5v-14q0-3 3-3h28q3 0 3 3v14q0 2-2 2h-30q-2 0-2-2z" stroke="#c0e4ff" />
				<path d="M443.5 857l7 7.5h-14z" fill="#c0e4ff" shapeRendering="auto" />

				{/* Zoom tool */}
				<g shapeRendering="auto" stroke="#c0e4ff">
					<circle cx="1855.5" cy="124.5" r="6.5" strokeWidth="2.5" />
					<path d="M1861 130l8 8.5" strokeWidth="5" />
					<path d="M1852 124.500h7M1855.500 121v7" strokeWidth="3" />
				</g>
			</svg>
		</div>
	);
}

/* ---------- Packet table ---------- */

const SortIcon = () => (
	<svg width="8" height="12" viewBox="0 0 8 12" fill="#1c2a38" className="shrink-0" aria-hidden="true">
		<path d="M4 0l4 5H0zM4 12l4-5H0z" />
	</svg>
);

function PacketTable() {
	return (
		<div className="flex min-h-0 flex-1 pr-[5px] pl-[5px]">
			<div className="min-w-0 flex-1 overflow-hidden">
				<table className="w-full table-fixed border-collapse text-[12px] text-[#c0e4ff]">
					<thead>
						<tr className="h-[27px] bg-[#6aaae4] text-[11px] text-[#22303e]">
							{COLUMNS.map(({ name, width, left }) => (
								<th key={name} scope="col" className={`border border-[#808080] p-0 font-normal ${width}`}>
									<button
										type="button"
										className={`flex w-full items-center gap-[5px] pr-[5px] whitespace-nowrap ${
											left ? 'justify-between pl-[11px]' : 'justify-end'
										}`}>
										{name}
										<SortIcon />
									</button>
								</th>
							))}
							<th scope="col" aria-label="Vazio" className="border-y border-[#808080]" />
						</tr>
					</thead>
					<tbody>
						{PACKETS.map((row) => (
							<tr key={row[0]} className="h-[27px] odd:bg-[#3c3c3c] even:bg-[#282828]">
								{row.map((value, i) => (
									<td
										key={COLUMNS[i].name}
										className={`border border-[#808080] px-[7px] py-0 ${i < 4 ? 'text-right' : 'text-left'}`}>
										{value}
									</td>
								))}
								<td className="border-y border-[#808080]" />
							</tr>
						))}
					</tbody>
				</table>
			</div>
			<div className="mt-7 w-2 bg-[#3c3c3c]">
				<div className="h-6 border border-[#6aaae4] bg-[#c0e4ff]" />
			</div>
		</div>
	);
}

function DecoderPane() {
	return (
		<section className="relative mt-[7px] flex h-[150px] shrink-0 flex-col bg-[#282828] pt-[22px] text-[12px]">
			{/* Decoder tab hangs from the top edge */}
			<div className="absolute top-0 left-[706px] h-5 w-[134px] text-[11px] text-[#c0e4ff]">
				<svg width="134" height="20" viewBox="0 0 134 20" fill="none" stroke="#5b93c8" className="absolute" aria-hidden="true">
					<path d="M.5 0l11 19.5h112L134 0" />
				</svg>
				<div className="relative flex h-5 items-center justify-center gap-[6px] pl-3">
					<span className="font-semibold">SPI - MISO/M...</span>
					<button type="button" aria-label="Fechar aba">
						×
					</button>
				</div>
			</div>

			<div className="flex h-7 shrink-0 items-start gap-2 pr-[4px] pl-[5px] font-semibold">
				<button type="button" className={`flex h-[23px] w-[89px] items-center justify-center gap-2 text-[11px] ${outline}`}>
					<ExportIcon />
					Exportar
				</button>
				<button type="button" className={`flex h-[23px] w-[125px] items-center justify-center gap-2 text-[11px] ${outline}`}>
					<Link2 size={16} strokeWidth={1.5} className="-rotate-45" />
					Dados p/ texto
				</button>
				<button type="button" className={`flex h-[23px] w-[89px] items-center justify-center gap-1 text-[11px] ${outline}`}>
					<FieldsIcon />
					Campos
				</button>
				<div className="flex gap-[2px]">
					<button
						type="button"
						aria-label="Aumentar fonte"
						className={`flex h-[23px] w-10 items-center justify-center font-['Roboto',sans-serif] text-[20px] font-bold ${outline}`}>
						A<span className="mb-2 text-[7px]">▲</span>
					</button>
					<button
						type="button"
						aria-label="Diminuir fonte"
						className={`flex h-[23px] w-10 items-center justify-center font-['Roboto',sans-serif] text-[17px] font-bold ${outline}`}>
						A<span className="mb-2 text-[7px]">▼</span>
					</button>
				</div>
				<div className="flex h-[23px] w-[192px] overflow-hidden rounded-[4px] border border-[#5b93c8] font-normal">
					<button type="button" aria-pressed="true" className="w-1/2 bg-[#c0e4ff] text-[11px] whitespace-nowrap text-[#1c2a38]">
						Todos os buffers
					</button>
					<button type="button" aria-pressed="false" className="w-1/2 text-[11px] font-semibold whitespace-nowrap text-[#c0e4ff]">
						Buffer atual
					</button>
				</div>

				<div className="ml-auto flex items-start">
					<button type="button" className={`flex h-[23px] w-[124px] items-center justify-center gap-2 text-[11px] ${outline}`}>
						<FunnelIcon />
						Adicionar filtro
					</button>
					<label htmlFor="campo" className="ml-2 w-[58px] text-[11px] leading-6 font-normal text-[#e8e8e8]">
						Pesquisar:
					</label>
					<div className="relative">
						<select id="campo" className={`h-[23px] w-[125px] appearance-none pl-[2px] text-[11px] ${outline}`}>
							<option>Todos os campos</option>
						</select>
						<span className="pointer-events-none absolute top-1 right-[2px] text-[10px] text-[#c0e4ff]">▼</span>
					</div>
					<input
						type="text"
						aria-label="Valor da pesquisa"
						placeholder="[Digitar valor]"
						className="ml-[5px] h-[23px] w-[127px] border border-[#5b93c8] bg-transparent px-[3px] text-[11px] font-normal text-[#e8e8e8] placeholder:text-[#707070]"
					/>
					<button type="button" aria-label="Anterior" className={`ml-[6px] flex h-[23px] w-[39px] items-center justify-center ${outline}`}>
						<Svg w={22} h={16} className="text-[#9a9a9a]">
							<path d="M1 15L11 2l10 13" strokeWidth="2.5" />
						</Svg>
					</button>
					<button type="button" aria-label="Próximo" className={`ml-[2px] flex h-[23px] w-[39px] items-center justify-center ${outline}`}>
						<Svg w={22} h={16} className="text-[#9a9a9a]">
							<path d="M1 1l10 13L21 1" strokeWidth="2.5" />
						</Svg>
					</button>
				</div>
			</div>

			<PacketTable />
		</section>
	);
}

export default function App() {
	return (
		<div className="flex h-screen flex-col overflow-hidden bg-[#1a1a1a] font-['Open_Sans','Noto_Sans',sans-serif]">
			<TitleBar />
			<TopBar />
			<main className="flex min-h-0 flex-1">
				<Sidebar />
				<DigitalPanel />
				<div className="ml-[7px] flex min-w-0 flex-1 flex-col">
					<ScopeView />
					<DecoderPane />
				</div>
			</main>
		</div>
	);
}
